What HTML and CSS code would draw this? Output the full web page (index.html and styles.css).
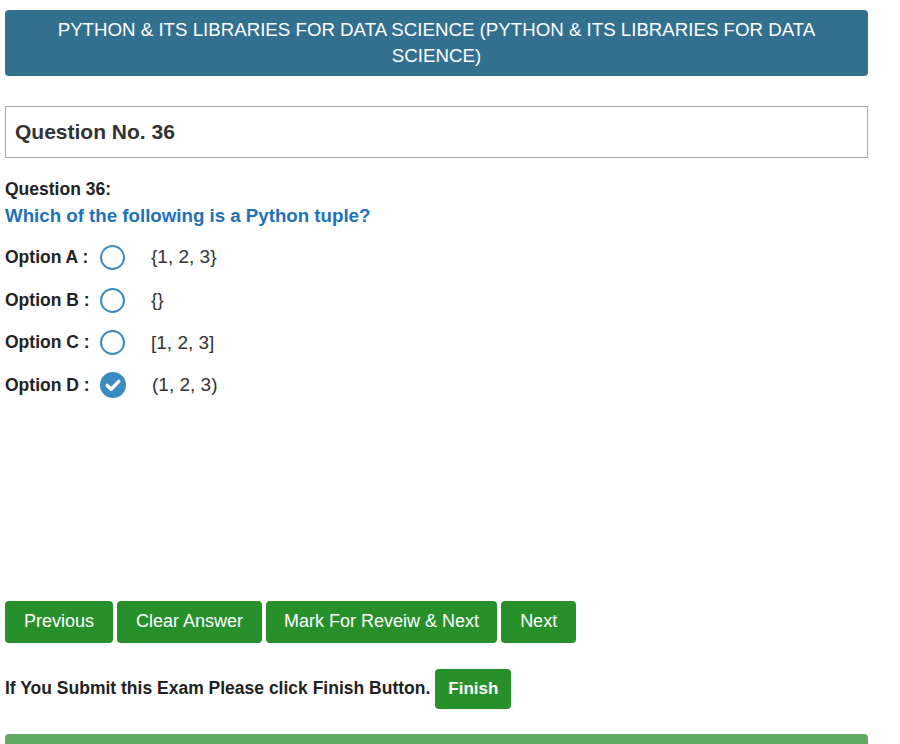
FILE: index.html
```html
<!DOCTYPE html>
<html lang="en">
<head>
<meta charset="utf-8">
<title>Exam</title>
<link rel="stylesheet" href="styles.css">
</head>
<body>
<div class="page">
  <div class="exam-title">PYTHON &amp; ITS LIBRARIES FOR DATA SCIENCE (PYTHON &amp; ITS LIBRARIES FOR DATA SCIENCE)</div>

  <div class="qno-box">Question No. 36</div>

  <div class="q-label">Question 36:</div>
  <div class="q-text">Which of the following is a Python tuple?</div>

  <div class="options">
    <div class="option">
      <span class="opt-label">Option A :</span>
      <span class="radio"></span>
      <span class="opt-text">{1, 2, 3}</span>
    </div>
    <div class="option">
      <span class="opt-label">Option B :</span>
      <span class="radio"></span>
      <span class="opt-text">{}</span>
    </div>
    <div class="option">
      <span class="opt-label">Option C :</span>
      <span class="radio"></span>
      <span class="opt-text">[1, 2, 3]</span>
    </div>
    <div class="option">
      <span class="opt-label">Option D :</span>
      <span class="radio checked">
        <svg viewBox="0 0 26 26" width="26" height="26"><circle cx="13" cy="13" r="13" fill="#3a8bc0"/><path d="M7.2 13.4 L11.2 17.2 L18.8 9.4" fill="none" stroke="#fff" stroke-width="3.4" stroke-linecap="round" stroke-linejoin="round"/></svg>
      </span>
      <span class="opt-text">(1, 2, 3)</span>
    </div>
  </div>

  <div class="actions">
    <button class="btn">Previous</button>
    <button class="btn">Clear Answer</button>
    <button class="btn btn-mark">Mark For Reveiw &amp; Next</button>
    <button class="btn">Next</button>
  </div>

  <div class="finish-row">
    <span class="finish-text">If You Submit this Exam Please click Finish Button.</span>
    <button class="btn btn-finish">Finish</button>
  </div>

  <div class="bottom-bar"></div>
</div>
</body>
</html>
```

FILE: styles.css
```css
html, body {
  margin: 0;
  padding: 0;
  background: #fff;
  overflow: hidden;
}
body {
  font-family: "Liberation Sans", Arial, sans-serif;
  color: #333;
}
.page {
  width: 863px;
  margin: 0 0 0 5px;
  padding-top: 10px;
}
.exam-title {
  background: #33708f;
  color: #fff;
  border-radius: 4px;
  font-size: 18.7px;
  line-height: 26px;
  padding: 7px 20px;
  text-align: center;
}
.qno-box {
  margin-top: 30px;
  border: 1px solid #aaa;
  height: 50px;
  line-height: 50px;
  padding: 0 9px;
  font-size: 21px;
  font-weight: bold;
  color: #333;
}
.q-label {
  margin-top: 20px;
  font-size: 17.5px;
  line-height: 22px;
  font-weight: bold;
  color: #222;
}
.q-text {
  margin-top: 4px;
  font-size: 18.7px;
  line-height: 24px;
  font-weight: bold;
  color: #1d72b8;
}
.options {
  margin-top: 8px;
  display: flex;
  flex-direction: column;
}
.option {
  display: flex;
  align-items: center;
  height: 42.7px;
}
.opt-label {
  width: 95px;
  font-size: 17.5px;
  font-weight: bold;
  color: #222;
}
.radio {
  width: 21px;
  height: 21px;
  border: 2.5px solid #3a8bc0;
  border-radius: 50%;
  box-sizing: content-box;
  display: inline-block;
  flex: none;
}
.radio.checked {
  border: none;
  width: 26px;
  height: 26px;
}
.radio.checked svg {
  display: block;
}
.opt-text {
  margin-left: 26px;
  font-size: 19px;
  color: #333;
}
.actions {
  margin-top: 194px;
  display: flex;
  gap: 4px;
}
.btn {
  font-family: "Liberation Sans", Arial, sans-serif;
  background: #28902b;
  color: #fff;
  border: none;
  border-radius: 4px;
  font-size: 18px;
  height: 42px;
  padding: 0 19px;
  cursor: pointer;
}
.btn-mark {
  padding: 0 18px;
}
.finish-row {
  margin-top: 26px;
  display: flex;
  align-items: center;
  gap: 5px;
}
.finish-text {
  font-size: 17.5px;
  font-weight: bold;
  color: #222;
}
.btn-finish {
  height: 40px;
  font-size: 17px;
  font-weight: bold;
  padding: 0 13px;
}
.bottom-bar {
  margin-top: 25px;
  height: 40px;
  background: #62ab62;
  border-radius: 4px 4px 0 0;
}
```
